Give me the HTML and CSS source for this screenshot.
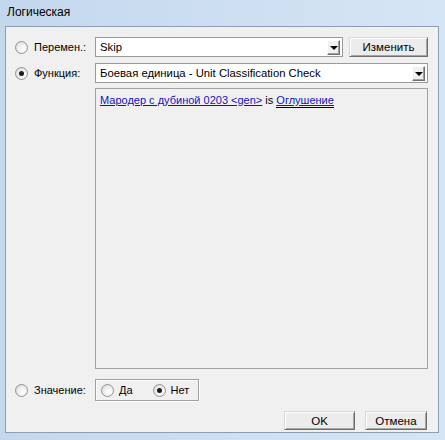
FILE: index.html
```html
<!DOCTYPE html>
<html>
<head>
<meta charset="utf-8">
<link rel="stylesheet" href="styles.css">
</head>
<body>
<div class="window">
  <div class="titlebar">Логическая</div>
  <div class="client">
    <div class="row row-var">
      <div class="lab"><span class="radio"></span><span>Перемен.:</span></div>
      <div class="combo combo-short"><span class="val">Skip</span><span class="drop"><span class="tri"></span></span></div>
      <div class="btn btn-change">Изменить</div>
    </div>
    <div class="row row-func">
      <div class="lab"><span class="radio checked"></span><span>Функция:</span></div>
      <div class="combo combo-long"><span class="val">Боевая единица - Unit Classification Check</span><span class="drop"><span class="tri"></span></span></div>
    </div>
    <div class="row row-area">
      <div class="lab"></div>
      <div class="area"><a class="link">Мародер с дубиной 0203 &lt;gen&gt;</a> is <a class="link sel">Оглушение</a></div>
    </div>
    <div class="row row-val">
      <div class="lab"><span class="radio"></span><span>Значение:</span></div>
      <div class="group">
        <span class="radio"></span><span class="opt">Да</span>
        <span class="radio checked gap"></span><span class="opt">Нет</span>
      </div>
    </div>
    <div class="buttons">
      <div class="btn btn-ok">OK</div>
      <div class="btn btn-cancel">Отмена</div>
    </div>
  </div>
</div>
</body>
</html>
```
FILE: styles.css
```css
html, body {
  margin: 0;
  padding: 0;
}
body {
  width: 445px;
  height: 440px;
  overflow: hidden;
  font-family: "Liberation Sans", Arial, sans-serif;
  font-size: 11px;
  color: #000;
}
.window {
  width: 445px;
  height: 440px;
  display: flex;
  flex-direction: column;
  background: linear-gradient(90deg, #c3d7ed 0%, #cfe0f2 60%, #d6e5f5 100%);
  box-sizing: border-box;
}
.titlebar {
  height: 26px;
  line-height: 24px;
  padding-left: 7px;
  font-size: 12px;
  color: #000;
}
.client {
  margin: 0 6px 7px 5px;
  flex: 1;
  background: #f0f0f0;
  border: 1px solid #8c9db4;
  display: flex;
  flex-direction: column;
  padding: 10px 10px 0 0;
}
.row {
  display: flex;
  align-items: center;
}
.lab {
  width: 89px;
  display: flex;
  align-items: center;
  padding-left: 9px;
  box-sizing: border-box;
  gap: 6px;
}
.radio {
  width: 11px;
  height: 11px;
  border: 1px solid #929292;
  border-radius: 50%;
  background: radial-gradient(circle at 65% 65%, #ffffff 0%, #f2f2f2 40%, #d2d2d2 100%);
  position: relative;
  flex: none;
}
.radio.checked::after {
  content: "";
  position: absolute;
  left: 3px;
  top: 3px;
  width: 5px;
  height: 5px;
  border-radius: 50%;
  background: #1a1a1a;
}
.combo {
  height: 20px;
  background: #fff;
  border: 1px solid #9a9a9a;
  box-sizing: border-box;
  display: flex;
  align-items: center;
  justify-content: space-between;
  padding: 0 2px 0 4px;
  font-size: 11.3px;
}
.combo-short { width: 248px; }
.combo-long { width: 333px; }
.drop {
  width: 13px;
  height: 15px;
  box-sizing: border-box;
  background: #f0f0f0;
  border: 1px solid;
  border-color: #fff #6e6e6e #6e6e6e #fff;
  box-shadow: inset -1px -1px 0 #a0a0a0;
  display: flex;
  align-items: center;
  justify-content: center;
}
.tri {
  width: 0;
  height: 0;
  border-left: 4px solid transparent;
  border-right: 4px solid transparent;
  border-top: 4px solid #000;
  margin-top: 1px;
}
.btn {
  height: 19px;
  box-sizing: border-box;
  background: #ececec;
  border: 1px solid;
  border-color: #d8d8d8 #6d6d6d #6d6d6d #d8d8d8;
  box-shadow: inset 1px 1px 0 #fff, inset -1px -1px 0 #a5a5a5;
  display: flex;
  align-items: center;
  justify-content: center;
  font-size: 11.5px;
}
.btn-change {
  width: 79px;
  margin-left: 6px;
  height: 20px;
}
.row-func { margin-top: 6px; }
.row-area { margin-top: 5px; align-items: stretch; }
.area {
  width: 333px;
  height: 281px;
  box-sizing: border-box;
  border: 1px solid #a3a3a3;
  padding: 5px 4px;
}
.link {
  color: #1212c8;
  text-decoration: underline;
}
.link.sel {
  border-bottom: 1px solid #000;
  padding-bottom: 1px;
}
.row-val { margin-top: 10px; }
.group {
  width: 104px;
  height: 22px;
  box-sizing: border-box;
  border: 1px solid #a0a0a0;
  box-shadow: inset 1px 1px 0 #fff, 1px 1px 0 #fff;
  display: flex;
  align-items: center;
  padding-left: 5px;
}
.opt { margin-left: 5px; }
.radio.gap { margin-left: 20px; }
.buttons {
  display: flex;
  justify-content: flex-end;
  gap: 10px;
  margin-top: 10px;
  padding-right: 1px;
}
.btn-ok { width: 71px; }
.btn-cancel { width: 62px; }
```
